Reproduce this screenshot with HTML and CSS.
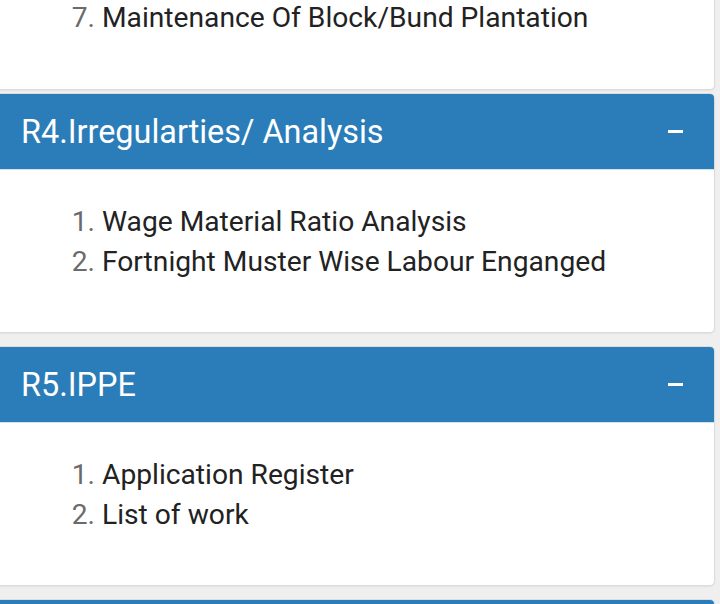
FILE: index.html
```html
<!DOCTYPE html>
<html lang="en">
<head>
    <meta charset="UTF-8">
    <meta name="viewport" content="width=device-width, initial-scale=1.0">
    <title>Reports</title>
    <link rel="stylesheet" href="styles.css">
</head>
<body>

<div class="report-list">
    <div class="card cut">
        <div class="card-body">
            <ol start="7">
                <li>Maintenance Of Block/Bund Plantation</li>
            </ol>
        </div>
    </div>

    <div class="card">
        <div class="card-header">
            <span>R4.Irregularties/ Analysis</span>
            <span class="toggle"></span>
        </div>
        <div class="card-body">
            <ol>
                <li>Wage Material Ratio Analysis</li>
                <li>Fortnight Muster Wise Labour Enganged</li>
            </ol>
        </div>
    </div>

    <div class="card">
        <div class="card-header">
            <span>R5.IPPE</span>
            <span class="toggle"></span>
        </div>
        <div class="card-body">
            <ol>
                <li>Application Register</li>
                <li>List of work</li>
            </ol>
        </div>
    </div>

    <div class="card">
        <div class="card-header"></div>
    </div>
</div>

</body>
</html>
```

FILE: styles.css
```css
body {
    font-family: Roboto, "Liberation Sans", sans-serif;
    margin: 0;
    padding: 0;
    background-color: #efefef;
    overflow: hidden;
}
.report-list {
    margin: 0 5px 0 -6px;
}
.card {
    background-color: #fff;
    border: 1px solid #dcdcdc;
    border-radius: 5px;
    box-shadow: 0 1px 2px rgba(0, 0, 0, 0.06);
    margin-bottom: 13px;
}
.card.cut {
    border-top: none;
    border-radius: 0 0 5px 5px;
    margin-bottom: 3px;
}
.card-header {
    display: flex;
    align-items: center;
    justify-content: space-between;
    height: 75px;
    padding: 0 31px 0 26px;
    background-color: #2a7db8;
    border-bottom: 1px solid #cfe2f1;
    border-radius: 4px 4px 0 0;
    color: #fff;
    font-size: 32.4px;
}
.toggle {
    width: 15px;
    height: 3px;
    background-color: #fff;
}
.card-body {
    padding: 32px 0 50px;
}
.card.cut .card-body {
    padding-top: 0;
    margin-top: -2px;
    padding-bottom: 51px;
}
ol {
    margin: 0;
    padding-left: 107px;
    color: #222;
    font-size: 28.2px;
    line-height: 40px;
}
li::marker {
    color: #6b6b6b;
}
```
